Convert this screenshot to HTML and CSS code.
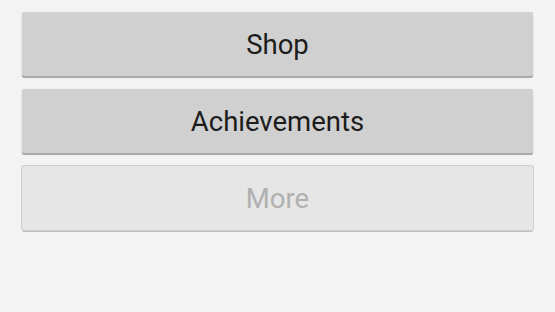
FILE: index.html
```html
<!DOCTYPE html>
<html>
<head>
<meta charset="utf-8">
<link rel="stylesheet" href="styles.css">
</head>
<body>
<div class="menu">
  <button class="btn">Shop</button>
  <button class="btn">Achievements</button>
  <button class="btn disabled">More</button>
</div>
</body>
</html>
```
FILE: styles.css
```css
html, body {
  margin: 0;
  padding: 0;
}
body {
  width: 555px;
  height: 312px;
  background: #f3f3f3;
  font-family: Roboto, "Liberation Sans", sans-serif;
}
.menu {
  display: flex;
  flex-direction: column;
  gap: 13px;
  padding: 12px 22px 0 22px;
}
.btn {
  height: 64px;
  border: none;
  border-radius: 2px;
  background: #d0d0d0;
  box-shadow: 0 2px 0 #a9a9a9, 0 1px 2px rgba(0,0,0,0.15);
  font-family: inherit;
  font-size: 27.5px;
  color: #1c1c1c;
  padding: 0;
  margin-bottom: 0;
}
.btn.disabled {
  background: #e6e6e6;
  color: #b0b0b0;
  box-shadow: 0 0 0 1px #cfcfcf, 0 2px 0 #bdbdbd;
}
```
